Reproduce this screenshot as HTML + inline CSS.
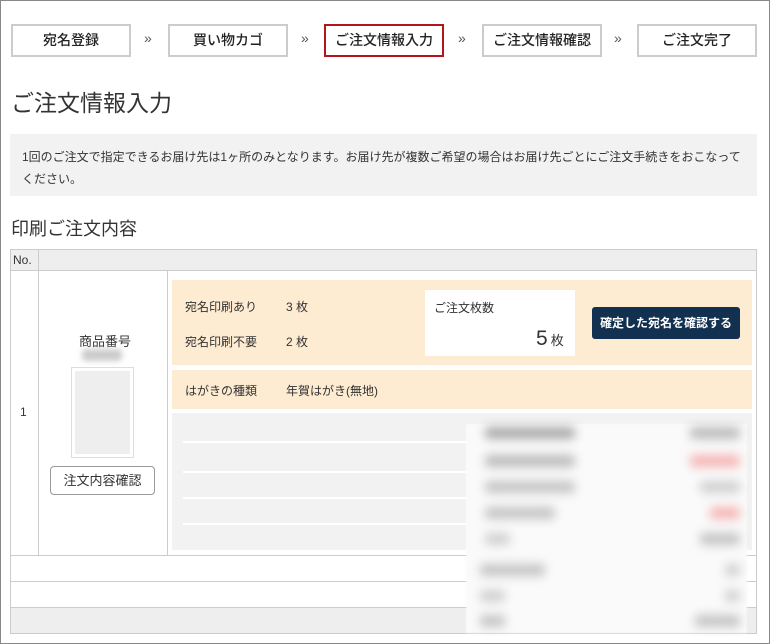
<!DOCTYPE html>
<html><head><meta charset="utf-8"><style>
*{margin:0;padding:0;box-sizing:border-box}
body{width:770px;height:644px;background:#fff;font-family:"Liberation Sans","Noto Sans CJK JP",sans-serif;color:#333;position:relative;overflow:hidden}
.frame{position:absolute;left:0;top:0;width:770px;height:644px;border:1px solid #888}
.a{position:absolute}
.bc{position:absolute;top:24px;height:33px;width:120px;border:2px solid #ccc;text-align:center;line-height:29px;font-size:14px;color:#222;font-weight:500}
.arr{position:absolute;top:30px;font-size:14px;color:#555}
.line{position:absolute;left:183px;width:290px;height:2px;background:#fff}
.blur{position:absolute;border-radius:4px;filter:blur(5px)}
</style></head><body>
<div class="frame"></div>
<div class="bc" style="left:11px">宛名登録</div>
<div class="arr" style="left:144px">»</div>
<div class="bc" style="left:168px">買い物カゴ</div>
<div class="arr" style="left:301px">»</div>
<div class="bc" style="left:324px;border-color:#b0161c">ご注文情報入力</div>
<div class="arr" style="left:458px">»</div>
<div class="bc" style="left:482px">ご注文情報確認</div>
<div class="arr" style="left:614px">»</div>
<div class="bc" style="left:637px">ご注文完了</div>
<div class="a" style="left:11px;top:84px;font-size:23px;color:#333">ご注文情報入力</div>
<div class="a" style="left:10px;top:134px;width:747px;height:62px;background:#f2f2f2;padding:12px 12px;font-size:12px;line-height:22px;color:#333">1回のご注文で指定できるお届け先は1ヶ所のみとなります。お届け先が複数ご希望の場合はお届け先ごとにご注文手続きをおこなってください。</div>
<div class="a" style="left:11px;top:215px;font-size:18px;color:#333">印刷ご注文内容</div>
<div class="a" style="left:10px;top:249px;width:747px;height:385px;border:1px solid #ccc"></div>
<div class="a" style="left:11px;top:250px;width:745px;height:21px;background:#eee;border-bottom:1px solid #ccc"></div>
<div class="a" style="left:38px;top:250px;width:1px;height:305px;background:#ccc"></div>
<div class="a" style="left:13px;top:253px;font-size:12px">No.</div>
<div class="a" style="left:167px;top:271px;width:1px;height:284px;background:#ccc"></div>
<div class="a" style="left:20px;top:405px;font-size:12px">1</div>
<div class="a" style="left:79px;top:331px;font-size:13px">商品番号</div>
<div class="blur" style="left:82px;top:349px;width:40px;height:12px;background:#ccc;filter:blur(3px)"></div>
<div class="a" style="left:71px;top:367px;width:63px;height:91px;border:1px solid #ddd;padding:3px"><div style="width:100%;height:100%;background:#eee"></div></div>
<div class="a" style="left:50px;top:466px;width:105px;height:29px;border:1px solid #999;border-radius:4px;text-align:center;line-height:27px;font-size:13px">注文内容確認</div>
<div class="a" style="left:11px;top:555px;width:745px;height:1px;background:#ccc"></div>
<div class="a" style="left:11px;top:581px;width:745px;height:1px;background:#ccc"></div>
<div class="a" style="left:11px;top:607px;width:745px;height:26px;background:#eee;border-top:1px solid #ccc"></div>
<div class="a" style="left:172px;top:280px;width:580px;height:85px;background:#fdebd2"></div>
<div class="a" style="left:185px;top:298px;font-size:12px">宛名印刷あり</div>
<div class="a" style="left:286px;top:298px;font-size:12px">3 枚</div>
<div class="a" style="left:185px;top:333px;font-size:12px">宛名印刷不要</div>
<div class="a" style="left:286px;top:333px;font-size:12px">2 枚</div>
<div class="a" style="left:425px;top:290px;width:150px;height:66px;background:#fff"></div>
<div class="a" style="left:434px;top:299px;font-size:12px">ご注文枚数</div>
<div class="a" style="left:536px;top:327px;font-size:21px">5<span style="font-size:13px;margin-left:3px">枚</span></div>
<div class="a" style="left:592px;top:307px;width:148px;height:32px;background:#12304f;border-radius:3px;color:#fff;font-size:12px;font-weight:bold;text-align:center;line-height:32px">確定した宛名を確認する</div>
<div class="a" style="left:172px;top:370px;width:580px;height:39px;background:#fdebd2"></div>
<div class="a" style="left:185px;top:382px;font-size:12px">はがきの種類</div>
<div class="a" style="left:286px;top:382px;font-size:12px">年賀はがき(無地)</div>
<div class="a" style="left:172px;top:413px;width:580px;height:137px;background:#f2f2f2"></div>
<div class="line" style="top:441px"></div>
<div class="line" style="top:471px"></div>
<div class="line" style="top:497px"></div>
<div class="line" style="top:523px"></div>
<div class="a" style="left:466px;top:424px;width:281px;height:209px;background:#fafafa;filter:blur(1px)"></div>
<div class="blur" style="left:485px;top:427px;width:90px;height:12px;background:#aaa"></div>
<div class="blur" style="left:690px;top:427px;width:50px;height:12px;background:#bbb"></div>
<div class="blur" style="left:485px;top:455px;width:90px;height:12px;background:#bbb"></div>
<div class="blur" style="left:690px;top:455px;width:50px;height:12px;background:#f6b4b4"></div>
<div class="blur" style="left:485px;top:481px;width:90px;height:12px;background:#c4c4c4"></div>
<div class="blur" style="left:700px;top:481px;width:40px;height:12px;background:#d0d0d0"></div>
<div class="blur" style="left:485px;top:507px;width:70px;height:12px;background:#c4c4c4"></div>
<div class="blur" style="left:710px;top:507px;width:30px;height:12px;background:#f6b4b4"></div>
<div class="blur" style="left:485px;top:533px;width:25px;height:12px;background:#d0d0d0"></div>
<div class="blur" style="left:700px;top:533px;width:40px;height:12px;background:#c4c4c4"></div>
<div class="blur" style="left:480px;top:564px;width:65px;height:12px;background:#c4c4c4"></div>
<div class="blur" style="left:725px;top:564px;width:15px;height:12px;background:#d0d0d0"></div>
<div class="blur" style="left:480px;top:590px;width:25px;height:12px;background:#d0d0d0"></div>
<div class="blur" style="left:725px;top:590px;width:15px;height:12px;background:#d0d0d0"></div>
<div class="blur" style="left:480px;top:615px;width:25px;height:12px;background:#c4c4c4"></div>
<div class="blur" style="left:695px;top:615px;width:45px;height:12px;background:#c4c4c4"></div>
</body></html>
